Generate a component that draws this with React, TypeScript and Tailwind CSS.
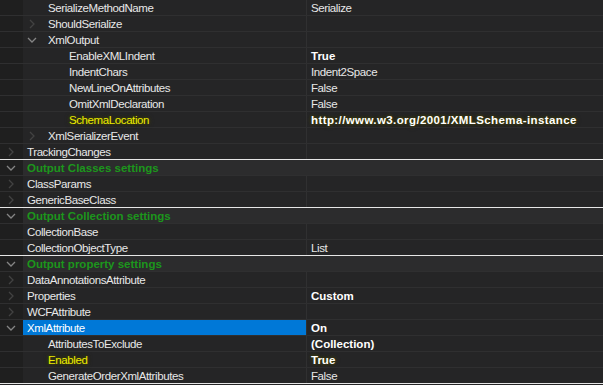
import React from "react";

type Row = {
  name: string;
  level?: number;
  chev?: "open" | "closed";
  value?: string;
  bold?: boolean;
  yellowName?: boolean;
  yellowValue?: boolean;
  cat?: boolean;
  sep?: boolean;
  selected?: boolean;
  wide?: boolean;
};

const rows: Row[] = [
  { name: "SerializeMethodName", level: 2, value: "Serialize" },
  { name: "ShouldSerialize", level: 2, chev: "closed" },
  { name: "XmlOutput", level: 2, chev: "open" },
  { name: "EnableXMLIndent", level: 3, value: "True", bold: true },
  { name: "IndentChars", level: 3, value: "Indent2Space" },
  { name: "NewLineOnAttributes", level: 3, value: "False" },
  { name: "OmitXmlDeclaration", level: 3, value: "False" },
  { name: "SchemaLocation", level: 3, yellowName: true, value: "http://www.w3.org/2001/XMLSchema-instance", bold: true, yellowValue: true, wide: true },
  { name: "XmlSerializerEvent", level: 2, chev: "closed" },
  { name: "TrackingChanges", level: 1, chev: "closed", sep: true },
  { name: "Output Classes settings", cat: true, chev: "open" },
  { name: "ClassParams", level: 1, chev: "closed" },
  { name: "GenericBaseClass", level: 1, chev: "closed", sep: true },
  { name: "Output Collection settings", cat: true, chev: "open" },
  { name: "CollectionBase", level: 1 },
  { name: "CollectionObjectType", level: 1, value: "List", sep: true },
  { name: "Output property settings", cat: true, chev: "open" },
  { name: "DataAnnotationsAttribute", level: 1, chev: "closed" },
  { name: "Properties", level: 1, chev: "closed", value: "Custom", bold: true },
  { name: "WCFAttribute", level: 1, chev: "closed" },
  { name: "XmlAttribute", level: 1, chev: "open", value: "On", bold: true, selected: true },
  { name: "AttributesToExclude", level: 2, value: "(Collection)", bold: true },
  { name: "Enabled", level: 2, yellowName: true, value: "True", bold: true, yellowValue: true },
  { name: "GenerateOrderXmlAttributes", level: 2, value: "False", sep: true },
];

function Chevron({ open, x }: { open: boolean; x: number }) {
  return (
    <svg
      width="10"
      height="10"
      viewBox="0 0 10 10"
      className="absolute top-[3px]"
      style={{ left: x }}
    >
      {open ? (
        <path d="M1 3 L5 7 L9 3" fill="none" stroke="#858585" strokeWidth="1.3" />
      ) : (
        <path d="M3 1 L7 5 L3 9" fill="none" stroke="#424242" strokeWidth="1.3" />
      )}
    </svg>
  );
}

const glow = "[text-shadow:0_0_3px_#4a4a00,0_0_5px_#3a3a00]";

export default function App() {
  return (
    <div
      className="w-[603px] h-[385px] overflow-hidden bg-[#252526] text-[11.5px] leading-[16px] text-[#e8e8e8] relative"
      style={{ fontFamily: "'Liberation Sans', Arial, sans-serif" }}
    >
      {rows.map((r, i) => {
        const lvl = r.level ?? 1;
        const chevX = lvl === 1 || r.cat ? 6 : lvl === 2 ? 27 : 48;
        const textPad = r.cat ? 4 : lvl === 1 ? 4 : lvl === 2 ? 25 : 46;
        const border = r.sep ? "border-[#e6e6e6]" : "border-[#2f2f30]";
        if (r.cat) {
          return (
            <div key={i} className={`relative flex h-[16px] border-b ${border} bg-[#2c2c2d]`}>
              <div className="w-[23px] shrink-0 bg-[#1f1f1f]" />
              {r.chev && <Chevron open={r.chev === "open"} x={chevX} />}
              <div className="pl-[4px] font-bold text-[#1c961c] whitespace-nowrap">{r.name}</div>
            </div>
          );
        }
        return (
          <div key={i} className={`relative flex h-[16px] border-b ${border}`}>
            <div className="w-[23px] shrink-0 bg-[#1f1f1f]" />
            {r.chev && <Chevron open={r.chev === "open"} x={chevX} />}
            <div
              className={`w-[283px] shrink-0 whitespace-nowrap tracking-[-0.4px] ${r.selected ? "bg-[#0078d7] text-white" : ""} ${r.yellowName ? `text-[#ecec00] ${glow}` : ""}`}
              style={{ paddingLeft: textPad }}
            >
              {r.name}
            </div>
            <div className="w-px shrink-0 bg-[#303031]" />
            <div
              className={`pl-[4px] whitespace-nowrap ${r.bold ? "font-bold text-white" : "tracking-[-0.4px]"} ${r.wide ? "tracking-[0.4px]" : ""} ${r.yellowValue ? `text-[#f0f000] ${glow}` : ""}`}
            >
              {r.value}
            </div>
          </div>
        );
      })}
    </div>
  );
}
